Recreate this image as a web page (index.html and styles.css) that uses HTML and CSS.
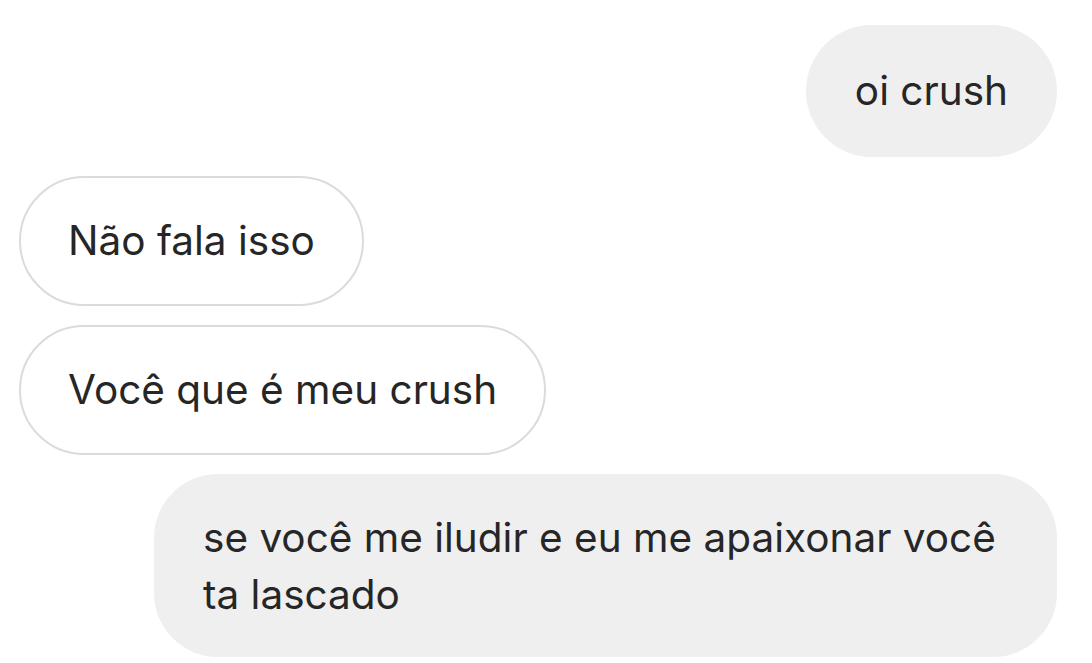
FILE: index.html
```html
<!DOCTYPE html>
<html lang="pt">
<head>
<meta charset="utf-8">
<link rel="stylesheet" href="styles.css">
</head>
<body>
<div class="chat">
  <div class="msg sent">oi crush</div>
  <div class="msg recv">Não fala isso</div>
  <div class="msg recv">Você que é meu crush</div>
  <div class="msg sent wide">se você me iludir e eu me apaixonar você ta lascado</div>
</div>
</body>
</html>
```
FILE: styles.css
```css
html, body {
  margin: 0;
  padding: 0;
  background: #ffffff;
}
.chat {
  display: flex;
  flex-direction: column;
  gap: 19px;
  padding: 25px 35px 0 19px;
  font-family: Inter, "Liberation Sans", sans-serif;
  font-size: 40.5px;
  letter-spacing: 0;
  line-height: 54px;
  color: #262626;
}
.msg {
  box-sizing: border-box;
  padding: 39px 49px;
  border-radius: 66px;
  max-width: 903px;
}
.sent {
  align-self: flex-end;
  background: #efefef;
}
.recv {
  align-self: flex-start;
  background: #ffffff;
  border: 2px solid #dbdbdb;
  padding: 36px 47px;
}
.wide {
  padding: 35px 49px 34px;
  line-height: 57px;
  border-radius: 64px;
}
```
